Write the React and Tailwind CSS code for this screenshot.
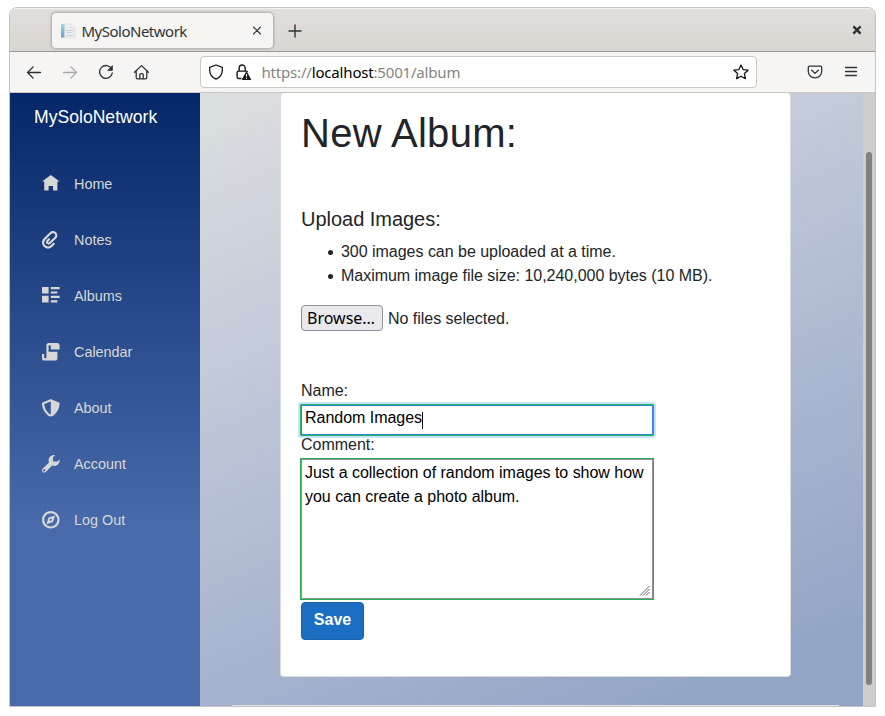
import React from "react";

const NAV = [
  { label: "Home", d: "M4 0l-4 3h1v4h2v-2h2v2h2v-4.03l1 .03-4-3z" },
  { label: "Notes", d: "M5 0c-.51 0-1.02.21-1.41.59l-2.78 2.72c-1.07 1.07-1.07 2.8 0 3.88 1.07 1.07 2.8 1.07 3.88 0l1.25-1.25-.69-.69-1.16 1.13-.09.13c-.69.69-1.81.69-2.5 0-.68-.68-.66-1.78 0-2.47l2.78-2.75c.39-.39 1.04-.39 1.44 0 .39.39.37 1.01 0 1.41l-2.5 2.47c-.1.1-.27.1-.38 0-.1-.1-.1-.27 0-.38l.06-.03.91-.94-.69-.69-.97.97c-.48.48-.48 1.27 0 1.75s1.27.49 1.75 0l2.5-2.44c.78-.78.78-2.04 0-2.81-.39-.39-.89-.59-1.41-.59z" },
  { label: "Albums", d: "M0 0v3h3v-3h-3zm4 0v1h4v-1h-4zm0 2v1h3v-1h-3zm-4 2v3h3v-3h-3zm4 0v1h4v-1h-4zm0 2v1h3v-1h-3z" },
  { label: "Calendar", d: "M3 0c-.55 0-1 .45-1 1v5.5c0 .28-.22.5-.5.5s-.5-.22-.5-.5v-1.5h-1v2c0 .55.45 1 1 1h5c.55 0 1-.45 1-1v-3h-4v-2.5c0-.28.22-.5.5-.5s.5.22.5.5v1.5h4v-2c0-.55-.45-1-1-1h-4z" },
  { label: "About", d: "M4 0l-.19.09-3.5 1.47-.31.13v.31c0 1.66.67 3.12 1.47 4.19.4.53.83.97 1.25 1.28.42.31.83.53 1.28.53.46 0 .86-.22 1.28-.53.42-.31.85-.75 1.25-1.28.8-1.07 1.47-2.53 1.47-4.19v-.31l-.31-.13-3.5-1.47-.19-.09zm0 1.09v5.91c-.04 0-.36-.09-.69-.34s-.71-.64-1.06-1.11c-.66-.88-1.17-2.07-1.22-3.28l2.97-1.19z" },
  { label: "Account", d: "M5.5 0c-1.38 0-2.5 1.12-2.5 2.5 0 .32.08.62.19.91l-2.91 2.88c-.39.39-.39 1.05 0 1.44.2.2.46.28.72.28.26 0 .52-.09.72-.28l2.88-2.91c.28.11.58.19.91.19 1.38 0 2.5-1.12 2.5-2.5 0-.16 0-.32-.03-.47l-.97.97h-2v-2l.97-.97c-.15-.03-.31-.03-.47-.03zm-4.5 6.5c.28 0 .5.22.5.5s-.22.5-.5.5-.5-.22-.5-.5.22-.5.5-.5z" },
  { label: "Log Out", d: "M4 0c-2.2 0-4 1.8-4 4s1.8 4 4 4 4-1.8 4-4-1.8-4-4-4zm0 1c1.66 0 3 1.34 3 3s-1.34 3-3 3-3-1.34-3-3 1.34-3 3-3zm2 1l-3 1-1 3 3-1 1-3zm-2 1.5c.28 0 .5.22.5.5s-.22.5-.5.5-.5-.22-.5-.5.22-.5.5-.5z" },
];

const LIMITS = [
  "300 images can be uploaded at a time.",
  "Maximum image file size: 10,240,000 bytes (10 MB).",
];

function Line({ className = "", children, w = 1.5 }) {
  return (
    <svg viewBox="0 0 16 16" fill="none" stroke="currentColor" strokeWidth={w} strokeLinecap="round" strokeLinejoin="round" className={"block size-4 shrink-0 " + className}>
      {children}
    </svg>
  );
}

function TabBar() {
  return (
    <div className="flex h-11 shrink-0 border-b border-[#9a9691] bg-linear-to-b from-[#e1dedb] to-[#dad6d2] pl-[41px] shadow-[inset_0_1px_0_#f3f1f0]">
      <div className="mt-[4px] flex h-[37px] w-[223px] items-center rounded-[5px] border border-[#bab8ba] bg-[#f6f5f4] pl-[8px] shadow-[0_0_1px_1px_rgba(120,120,130,0.2)]">
        <svg viewBox="0 0 16 16" className="block size-4">
          <defs>
            <linearGradient id="spine" x1="0" y1="0" x2="0" y2="1">
              <stop offset="0" stopColor="#a6d2ef" />
              <stop offset="1" stopColor="#5aa5d6" />
            </linearGradient>
          </defs>
          <path d="M1 1h3.500v13.500H1z" fill="url(#spine)" />
          <path d="M5 .8h6.500l3.700 3.700V15H5z" fill="#eceef0" stroke="#dcdfe3" strokeWidth=".6" />
          <path d="M11 1v4h4" fill="#f8f8f8" stroke="#d3d6db" strokeWidth=".7" />
          <path d="M6.500 7.500h7M6.500 9.500h5M6.500 12.500h7" stroke="#ccd0d6" strokeWidth="1" />
        </svg>
        <span className="ml-[5.500px] w-[167.500px] text-[15px] leading-5 tracking-[-0.5px] text-[#2e3436]">MySoloNetwork</span>
        <Line w={1.1} className="text-[#2e3436]"><path d="M4.500 4l7 7M11.500 4l-7 7" /></Line>
      </div>
      <Line w={1.4} className="mt-[15px] ml-[13px] text-[#2e3436]"><path d="M8 2v12M2 8h12" /></Line>
      <Line w={2.4} className="mt-[14px] mr-[10px] ml-auto text-[#2e3436]"><path d="M5.200 5.200l5.600 5.600M10.800 5.200l-5.600 5.600" strokeLinecap="square" /></Line>
    </div>
  );
}

function Toolbar() {
  return (
    <div className="flex h-[41px] shrink-0 items-center border-b border-[#cdc7c2] bg-[#f6f5f4] pr-4 pl-4 text-[#2e3436]">
      <Line w={1.3}><path d="M1.500 8.500h13M7 3L1.500 8.500 7 14" /></Line>
      <Line w={1.3} className="ml-5 text-[#aaabab]"><path d="M1.500 8.500h13M9 3l5.500 5.500L9 14" /></Line>
      <Line w={1.3} className="ml-5">
        <path d="M13.700 5A6.400 6.400 0 1 0 14.300 9" />
        <path d="M14.400 2v4.400H10z" fill="currentColor" strokeWidth=".8" />
      </Line>
      <Line w={1.3} className="ml-[19px]"><path d="M1.500 8.200l7-6.600 7 6.600M3.200 7.200v6.400c0 .8.500 1.300 1.300 1.300h8c.8 0 1.300-.5 1.300-1.300V7.200M6.800 14.700v-4c0-.7.400-1.100 1.100-1.100h1.200c.7 0 1.100.4 1.100 1.100v4" /></Line>
      <div className="ml-[51px] flex h-8 w-[557px] items-center rounded border border-[#cdc7c2] bg-white pr-[7px] pl-[7px] text-[#15171a]">
        <Line w={1.3}><path d="M8 1l6.300 2.300v3.200c0 3.800-2.300 6.800-6.300 8.700-4-1.900-6.300-4.900-6.300-8.700V3.300z" /></Line>
        <svg viewBox="0 0 16 16" className="ml-[11px] block size-4 overflow-visible">
          <path d="M4.200 6.800V4a3 3 0 0 1 6 0v3M6.500 14.500h-3c-.9 0-1.400-.5-1.400-1.400V8.500c0-.9.500-1.400 1.400-1.400h7.700c.7 0 1.200.4 1.300 1" fill="none" stroke="currentColor" strokeWidth="1.400" />
          <path d="M11.500 8l4.200 7.500H7.300z" fill="currentColor" stroke="currentColor" strokeWidth="1" strokeLinejoin="round" />
          <path d="M11.500 10v2.800M11.500 13.700v1.200" stroke="#fff" strokeWidth="1.100" />
        </svg>
        <span className="ml-[10.500px] flex-1 text-[15px] leading-5 tracking-[-0.18px] text-[#858585]">https://<span className="text-black">localhost</span>:5001/album</span>
        <Line w={1.3}><path d="M8 1l2.100 4.600 5 .6-3.700 3.400 1 5L8 12.200l-4.400 2.400 1-5L.9 6.200l5-.6z" /></Line>
      </div>
      <Line w={1.300} className="ml-[50px]"><path d="M2.700 2.200h10.600c.9 0 1.400.5 1.400 1.400V7.500c0 3.700-3 6.300-6.700 6.300S1.300 11.200 1.300 7.500V3.600c0-.9.500-1.400 1.400-1.400zM4.700 6.200L8 9.400l3.300-3.200" /></Line>
      <Line w={1.300} className="ml-5"><path d="M2.500 3.500h11M2.500 7.500h11M2.500 11.500h11" /></Line>
    </div>
  );
}

function Sidebar() {
  return (
    <nav className="w-[190px] shrink-0 bg-[linear-gradient(180deg,#052767_0%,#486aaa_70%)]">
      <div className="flex h-[49px] items-center pl-6 text-[17.6px] text-white">MySoloNetwork</div>
      <ul className="mt-[14px]">
        {NAV.map((item) => (
          <li key={item.label} className="flex h-14 items-center pl-8 text-[14.4px] text-[#d7d7d7]">
            <svg viewBox="0 0 8 8" fill="currentColor" className="block size-[17.6px]"><path d={item.d} /></svg>
            <span className="mt-[2px] ml-[14.4px]">{item.label}</span>
          </li>
        ))}
      </ul>
    </nav>
  );
}

function AlbumForm() {
  return (
    <div className="flex h-[584px] w-[511px] flex-col rounded border border-t-0 border-[#dcdcdc] bg-white px-5 pt-4 text-base leading-6 tracking-[-0.025px] text-[#212529]">
      <h1 className="text-[40px] leading-[48px] tracking-[0.27px]">New Album:</h1>
      <h5 className="mt-[50px] text-[20px] leading-6">Upload Images:</h5>
      <ul className="mt-[9px] pl-[27px]">
        {LIMITS.map((text) => (
          <li key={text} className="flex items-center">
            <span className="mt-px mr-[8px] size-[5px] rounded-full bg-[#212529]" />
            {text}
          </li>
        ))}
      </ul>
      <div className="mt-[17px] flex items-center">
        <button className="h-[26px] w-[82px] rounded border border-[#8f8f9d] bg-[#e9e9ed] pr-[2px] font-['Noto_Sans'] text-base leading-6 tracking-normal text-black">Browse…</button>
        <span className="mt-px -mb-px ml-[5px]">No files selected.</span>
      </div>
      <label className="mt-12">Name:</label>
      <div className="mt-px -ml-px flex h-8 w-[354px] items-center rounded-[1px] border border-[#26b050] pl-1 text-black shadow-[inset_0_0_0_1px_#3584e4,0_0_0_2px_#c5e4ff]">
        <span className="-mt-1">Random Images</span>
        <span className="h-[17px] w-px bg-black" />
      </div>
      <label className="z-10 -mt-[3px]">Comment:</label>
      <div className="relative mt-px -ml-px h-[142px] w-[354px] border border-[#26b050] pt-[2px] pl-1 text-black shadow-[inset_0_0_0_1px_#8f8f9d]">
        Just a collection of random images to show how<br />you can create a photo album.
        <svg viewBox="0 0 11 11" className="absolute right-[3px] bottom-[3px] block size-[11px]" stroke="#666" strokeWidth="1">
          <path d="M1 10.500L10.500 1M4 10.500L10.500 4M7 10.500L10.500 7" />
        </svg>
      </div>
      <button className="mt-[2px] h-[38px] w-[63px] rounded border border-[#1861ac] bg-[#1b6ec2] pb-[2px] font-bold text-white">Save</button>
    </div>
  );
}

export default function App() {
  return (
    <div className="h-[716px] w-[885px] overflow-hidden bg-white pt-[7px] pl-[9px] font-['Liberation_Sans',Arial,sans-serif]">
      <div className="flex h-[700px] w-[867px] flex-col overflow-hidden rounded-t-lg border border-[#c4c4c2]">
        <div className="shrink-0 font-['Noto_Sans',sans-serif]">
          <TabBar />
          <Toolbar />
        </div>
        <div className="flex min-h-0 flex-1">
          <Sidebar />
          <main className="flex w-[663px] flex-col justify-between bg-[linear-gradient(157deg,#dedfe0_0%,#bac3d6_42%,#9dabca_80%,#92a5c6_92%)] pl-20">
            <AlbumForm />
            <hr className="-ml-12 w-[607px] border-0 border-t border-[#e2e4e8]" />
          </main>
          <div className="w-3 bg-[#cecece] pt-[59px] pl-[3px]">
            <div className="h-[533px] w-[6px] rounded-full bg-[#7e8282]" />
          </div>
        </div>
      </div>
    </div>
  );
}
